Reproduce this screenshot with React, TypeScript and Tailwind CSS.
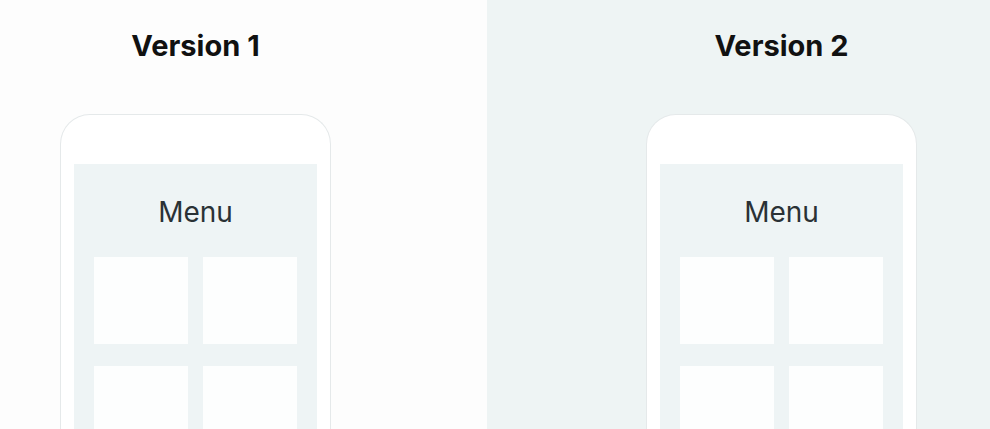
import React from "react";

const tiles = [0, 1, 2, 3];

function Phone() {
    return (
        <div className="shrink-0 w-[271px] h-[330px] rounded-t-[30px] border border-b-0 border-[#e5e9ea] bg-white px-[13px] pt-[49px]">
            <div className="bg-[#eef4f5] h-full px-[20px]">
                <div className="h-[93px] flex items-center justify-center pt-[2px]">
                    <span className="text-[28px] text-[#2a3135]" style={{ fontFamily: "Inter, sans-serif" }}>
                        Menu
                    </span>
                </div>
                <div className="grid grid-cols-2 gap-x-[15px] gap-y-[22px]">
                    {tiles.map((t) => (
                        <div key={t} className="h-[87px] bg-[#fdfefe]" />
                    ))}
                </div>
            </div>
        </div>
    );
}

function Panel({ title, bg, pad }: { title: string; bg: string; pad: string }) {
    return (
        <section className={`${bg} ${pad} h-full flex flex-col overflow-hidden`}>
            <div className="shrink-0 w-[271px] flex justify-center pt-[28px] h-[114px]">
                <h1 className="text-[29px] font-bold text-[#111] leading-9" style={{ fontFamily: "Inter, sans-serif" }}>
                    {title}
                </h1>
            </div>
            <Phone />
        </section>
    );
}

export default function App() {
    return (
        <main className="w-[990px] h-[429px] flex overflow-hidden">
            <div className="w-[487px] h-full">
                <Panel title="Version 1" bg="bg-[#fdfdfd]" pad="pl-[60px]" />
            </div>
            <div className="flex-1 h-full">
                <Panel title="Version 2" bg="bg-[#eef4f4]" pad="pl-[159px]" />
            </div>
        </main>
    );
}
